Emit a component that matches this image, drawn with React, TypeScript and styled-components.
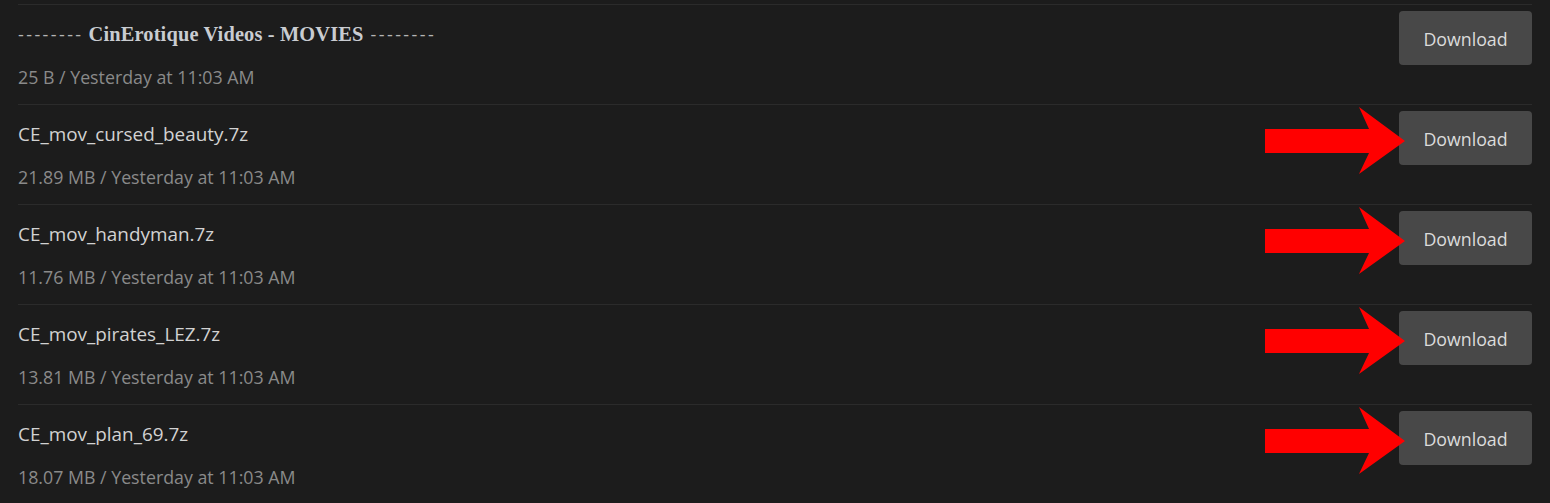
import React from "react";
import styled, { createGlobalStyle } from "styled-components";

const Global = createGlobalStyle`
  html, body { margin: 0; padding: 0; background: #1c1c1c; }
  body { font-family: "Open Sans", "Liberation Sans", sans-serif; }
`;

const List = styled.div`
  padding: 4px 18px 0 18px;
  background: #1c1c1c;
  min-height: 503px;
  box-sizing: border-box;
`;

const Row = styled.div`
  position: relative;
  display: flex;
  justify-content: space-between;
  align-items: flex-start;
  height: 100px;
  box-sizing: border-box;
  border-top: 1px solid #2b2b2b;
  padding-top: 6px;
`;

const Info = styled.div`
  display: flex;
  flex-direction: column;
  gap: 19px;
  padding-top: 11px;
`;

const Name = styled.div`
  font-size: 18.9px;
  line-height: 24px;
  color: #d2d2d2;
`;

const Title = styled.div`
  font-size: 18px;
  line-height: 24px;
  color: #b4b4b4;
`;

const Dashes = styled.span`
  letter-spacing: 2.4px;
`;

const Strong = styled.b`
  font-family: "Liberation Serif", "DejaVu Serif", serif;
  font-weight: 700;
  font-size: 20.4px;
  letter-spacing: 0.15px;
  color: #c9ccd1;
  margin: 0 7px 0 5px;
`;

const Meta = styled.div`
  font-size: 17.8px;
  line-height: 24px;
  color: #8a8a8a;
`;

const Button = styled.button`
  width: 133px;
  height: 54px;
  padding: 2px 0 0;
  border: none;
  border-radius: 4px;
  background: #484848;
  color: #dcdcdc;
  font-family: "Open Sans", "Liberation Sans", sans-serif;
  font-size: 17.8px;
  cursor: pointer;
`;

const Arrow = styled.svg`
  position: absolute;
  right: 127px;
  top: 2px;
`;

const files = [
  { name: "CE_mov_cursed_beauty.7z", size: "21.89 MB" },
  { name: "CE_mov_handyman.7z", size: "11.76 MB" },
  { name: "CE_mov_pirates_LEZ.7z", size: "13.81 MB" },
  { name: "CE_mov_plan_69.7z", size: "18.07 MB" },
];

const RedArrow = () => (
  <Arrow width="140" height="67" viewBox="0 0 140 67">
    <polygon points="0,22 104,22 94,0 140,34 94,67 104,46 0,46" fill="#ff0000" />
  </Arrow>
);

export default function App() {
  return (
    <>
      <Global />
      <List>
        <Row>
          <Info>
            <Title>
              <Dashes>--------</Dashes>
              <Strong>CinErotique Videos - MOVIES</Strong>
              <Dashes>--------</Dashes>
            </Title>
            <Meta>25 B / Yesterday at 11:03 AM</Meta>
          </Info>
          <Button>Download</Button>
        </Row>
        {files.map((f) => (
          <Row key={f.name}>
            <Info>
              <Name>{f.name}</Name>
              <Meta>{f.size} / Yesterday at 11:03 AM</Meta>
            </Info>
            <Button>Download</Button>
            <RedArrow />
          </Row>
        ))}
      </List>
    </>
  );
}
